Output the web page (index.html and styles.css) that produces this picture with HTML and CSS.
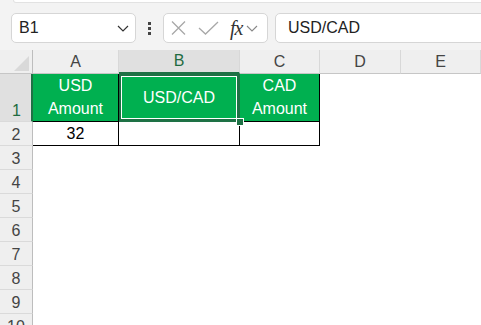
FILE: index.html
```html
<!DOCTYPE html>
<html>
<head>
    <title>USD to CAD</title>
    <meta charset="utf-8">
    <link rel="stylesheet" href="styles.css">
</head>
<body>
    <div class="ribbon-edge"></div>
    <div class="topbar">
        <div class="name-box">
            <span>B1</span>
            <svg width="12" height="7" viewBox="0 0 12 7"><path d="M1 1 L6 6 L11 1" fill="none" stroke="#333" stroke-width="1.2"/></svg>
        </div>
        <div class="grip"><i></i><i></i><i></i></div>
        <div class="fx-box">
            <svg class="cancel" width="15" height="14" viewBox="0 0 15 14"><path d="M1 0.5 L14 13.5 M14 0.5 L1 13.5" stroke="#a8a8a8" stroke-width="1.3"/></svg>
            <svg class="enter" width="21" height="14" viewBox="0 0 21 14"><path d="M1 7 L7.5 13 L20 1" fill="none" stroke="#a8a8a8" stroke-width="1.3"/></svg>
            <span class="fx">fx</span>
            <svg width="12" height="7" viewBox="0 0 12 7"><path d="M1 1 L6 6 L11 1" fill="none" stroke="#888" stroke-width="1.1"/></svg>
        </div>
        <div class="formula-input">USD/CAD</div>
    </div>

    <div class="sheet">
        <div class="corner"><div class="tri"></div></div>
        <div class="col-head">A</div>
        <div class="col-head active">B</div>
        <div class="col-head">C</div>
        <div class="col-head">D</div>
        <div class="col-head">E</div>

        <div class="row-head active">1</div>
        <div class="cell green bottom"><span>USD</span><span>Amount</span></div>
        <div class="cell green middle selected">USD/CAD<div class="handle"></div></div>
        <div class="cell green bottom"><span>CAD</span><span>Amount</span></div>
        <div class="cell"></div>
        <div class="cell"></div>

        <div class="row-head">2</div>
        <div class="cell boxed num">32</div>
        <div class="cell boxed"></div>
        <div class="cell boxed"></div>
        <div class="cell"></div>
        <div class="cell"></div>

        <div class="row-head">3</div><div class="cell"></div><div class="cell"></div><div class="cell"></div><div class="cell"></div><div class="cell"></div>
        <div class="row-head">4</div><div class="cell"></div><div class="cell"></div><div class="cell"></div><div class="cell"></div><div class="cell"></div>
        <div class="row-head">5</div><div class="cell"></div><div class="cell"></div><div class="cell"></div><div class="cell"></div><div class="cell"></div>
        <div class="row-head">6</div><div class="cell"></div><div class="cell"></div><div class="cell"></div><div class="cell"></div><div class="cell"></div>
        <div class="row-head">7</div><div class="cell"></div><div class="cell"></div><div class="cell"></div><div class="cell"></div><div class="cell"></div>
        <div class="row-head">8</div><div class="cell"></div><div class="cell"></div><div class="cell"></div><div class="cell"></div><div class="cell"></div>
        <div class="row-head">9</div><div class="cell"></div><div class="cell"></div><div class="cell"></div><div class="cell"></div><div class="cell"></div>
        <div class="row-head">10</div><div class="cell"></div><div class="cell"></div><div class="cell"></div><div class="cell"></div><div class="cell"></div>
    </div>
</body>
</html>
```

FILE: styles.css
```css
body {
    margin: 0;
    width: 481px;
    height: 325px;
    overflow: hidden;
    background: #f3f3f3;
    font-family: "Liberation Sans", Arial, sans-serif;
    font-size: 16px;
    color: #222;
}
.ribbon-edge {
    height: 2px;
    margin-left: 13px;
    margin-right: -10px;
    background: #fff;
    border: 1px solid #e2e2e2;
    border-top: none;
    border-radius: 0 0 0 6px;
}
.topbar {
    display: flex;
    align-items: center;
    height: 47px;
    box-sizing: border-box;
    padding: 10px 0 7px 11px;
}
.name-box, .fx-box, .formula-input {
    height: 30px;
    box-sizing: border-box;
    background: #fff;
    border: 1px solid #d6d6d6;
    border-radius: 5px;
    display: flex;
    align-items: center;
}
.name-box {
    width: 125px;
    padding: 0 6px 0 7px;
    justify-content: space-between;
}
.grip {
    width: 27px;
    display: flex;
    flex-direction: column;
    align-items: center;
    gap: 2px;
}
.grip i {
    width: 3px;
    height: 3px;
    background: #444;
}
.fx-box {
    width: 105px;
    padding: 0 4px 0 7px;
}
.fx-box .enter {
    margin-left: 12px;
}
.fx {
    margin-left: 11px;
    margin-right: 4px;
    font-family: "Liberation Serif", "Times New Roman", serif;
    font-style: italic;
    font-size: 20px;
    color: #333;
    letter-spacing: -1px;
}
.formula-input {
    flex: 1;
    margin-left: 7px;
    margin-right: -10px;
    padding-left: 12px;
}

.sheet {
    display: grid;
    grid-template-columns: 33px 86px 121px 80px 81px 80px;
    grid-template-rows: 24px 48px repeat(9, 24px);
    background: #fff;
}
.corner, .col-head, .row-head {
    background: #efefef;
    color: #444;
    box-sizing: border-box;
    display: flex;
    align-items: center;
    justify-content: center;
}
.corner {
    position: relative;
    border-right: 1px solid #bdbdbd;
    border-bottom: 1px solid #c6c6c6;
}
.tri {
    position: absolute;
    right: 3px;
    bottom: 2px;
    width: 0;
    height: 0;
    border-left: 15px solid transparent;
    border-bottom: 15px solid #d9d9d9;
}
.col-head {
    border-right: 1px solid #d8d8d8;
    border-bottom: 1px solid #c6c6c6;
}
.col-head.active {
    background: #e0e0e0;
    color: #1e6b41;
    border-bottom: 2px solid #1e7145;
}
.row-head {
    border-right: 1px solid #bdbdbd;
    border-bottom: 1px solid #dadada;
    align-items: flex-end;
    padding-bottom: 1px;
}
.row-head.active {
    background: #e0e0e0;
    color: #1e6b41;
    border-right: 2px solid #1e7145;
    padding-left: 2px;
}
.cell {
    box-sizing: border-box;
}
.green {
    background: #00b050;
    color: #fff;
    border-right: 1px solid #000;
    border-bottom: 1px solid #000;
    display: flex;
    flex-direction: column;
    align-items: center;
    line-height: 23px;
}
.green.bottom {
    justify-content: flex-end;
    padding-bottom: 1px;
}
.green.middle {
    justify-content: center;
}
.selected {
    position: relative;
    outline: 2px solid #1e7145;
    outline-offset: -2px;
    box-shadow: inset 0 0 0 3px #1e7145, inset 0 0 0 4px #fff;
    box-shadow: inset 0 0 0 2px #1e7145, inset 0 0 0 3px #fff;
}
.handle {
    position: absolute;
    right: -5px;
    bottom: -5px;
    width: 6px;
    height: 6px;
    background: #1e7145;
    border: 1px solid #fff;
}
.boxed {
    border-right: 1px solid #000;
    border-bottom: 1px solid #000;
}
.num {
    display: flex;
    align-items: center;
    justify-content: center;
    color: #000;
}
```
